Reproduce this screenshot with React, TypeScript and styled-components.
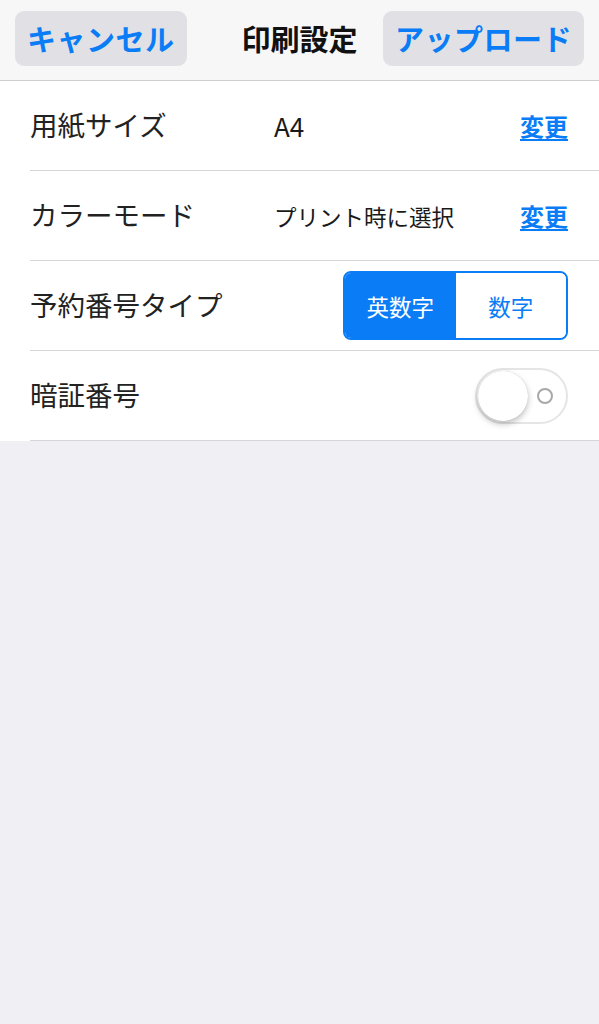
import * as React from "react"
import styled, { createGlobalStyle } from "styled-components"

const GlobalStyle = createGlobalStyle`
  html, body {
    margin: 0;
    padding: 0;
    background: #efeff4;
  }
  body {
    font-family: "Noto Sans CJK JP", "Noto Sans", sans-serif;
    color: #1c1c1c;
  }
`

const Page = styled.div`
  min-height: 1024px;
  background: #efeff4;
`

const Header = styled.header`
  display: grid;
  grid-template-columns: 1fr auto 1fr;
  align-items: center;
  height: 80px;
  padding: 0 15px;
  background: #f7f7f7;
  border-bottom: 1px solid #cfcfd2;
`

const HeaderButton = styled.button<{ $align: "left" | "right" }>`
  justify-self: ${(p) => (p.$align === "left" ? "start" : "end")};
  height: 55px;
  margin-top: -4px;
  padding: 0 12px;
  border: none;
  border-radius: 9px;
  background: #e1e1e5;
  color: #0a7cf5;
  font-family: inherit;
  font-size: 29px;
  font-weight: 700;
  letter-spacing: 0.5px;
`

const Title = styled.h1`
  margin: -4px 24px 0 24px;
  font-size: 29px;
  font-weight: 700;
  color: #111;
`

const List = styled.div`
  background: #fff;
`

const Row = styled.div`
  display: flex;
  align-items: center;
  height: 89px;
  margin-left: 30px;
  padding-right: 31px;
  border-bottom: 1px solid #d6d6d9;
`

const Label = styled.div`
  width: 244px;
  font-size: 27.5px;
  color: #222;
  margin-top: -4px;
`

const Value = styled.div<{ $size: number }>`
  flex: 1;
  font-size: ${(p) => p.$size}px;
  color: #1a1a1a;
`

const ChangeLink = styled.a`
  font-size: 24px;
  font-weight: 700;
  color: #0a7cf5;
  text-decoration: underline;
  text-underline-offset: 3px;
  text-decoration-thickness: 2px;
`

const Segmented = styled.div`
  margin-left: auto;
  display: flex;
  width: 225px;
  height: 69px;
  box-sizing: border-box;
  border: 2px solid #0a7cf5;
  border-radius: 8px;
  overflow: hidden;
`

const Segment = styled.div<{ $active?: boolean }>`
  flex: 1;
  display: flex;
  align-items: center;
  justify-content: center;
  font-size: 22.5px;
  background: ${(p) => (p.$active ? "#0a7cf5" : "#fff")};
  color: ${(p) => (p.$active ? "#fff" : "#0a7cf5")};
`

const Toggle = styled.div`
  margin-left: auto;
  position: relative;
  width: 93px;
  height: 56px;
  box-sizing: border-box;
  border: 2px solid #e5e5e5;
  border-radius: 28px;
  background: #fff;
`

const Knob = styled.div`
  position: absolute;
  left: 1px;
  top: 1px;
  width: 50px;
  height: 50px;
  border-radius: 50%;
  background: #fff;
  box-shadow: 0 3px 6px rgba(0, 0, 0, 0.25), 0 0 1px rgba(0, 0, 0, 0.2);
`

const OffMark = styled.div`
  position: absolute;
  right: 13px;
  top: 18px;
  width: 16px;
  height: 16px;
  box-sizing: border-box;
  border: 2px solid #a8a8a8;
  border-radius: 50%;
`

export default function App() {
  return (
    <Page>
      <GlobalStyle />
      <Header>
        <HeaderButton $align="left">キャンセル</HeaderButton>
        <Title>印刷設定</Title>
        <HeaderButton $align="right">アップロード</HeaderButton>
      </Header>
      <List>
        <Row>
          <Label>用紙サイズ</Label>
          <Value $size={26}>A4</Value>
          <ChangeLink>変更</ChangeLink>
        </Row>
        <Row>
          <Label>カラーモード</Label>
          <Value $size={22.5}>プリント時に選択</Value>
          <ChangeLink>変更</ChangeLink>
        </Row>
        <Row>
          <Label>予約番号タイプ</Label>
          <Segmented>
            <Segment $active>英数字</Segment>
            <Segment>数字</Segment>
          </Segmented>
        </Row>
        <Row>
          <Label>暗証番号</Label>
          <Toggle>
            <Knob />
            <OffMark />
          </Toggle>
        </Row>
      </List>
    </Page>
  )
}
